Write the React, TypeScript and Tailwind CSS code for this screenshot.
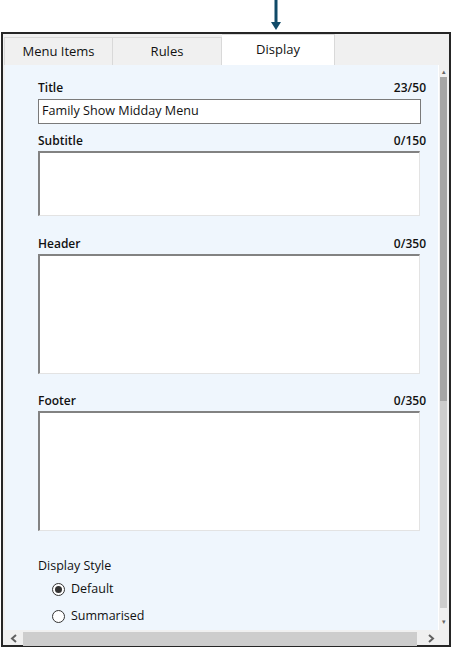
import React from "react";

const font = { fontFamily: '"Open Sans", "Noto Sans", sans-serif' };

function Field({ label, count, height, single, value, className }: { label: string; count: string; height: number; single?: boolean; value?: string; className?: string }) {
  return (
    <div className={className}>
      <div className="flex justify-between items-center h-4 mb-[3px] text-[12px] font-semibold text-[#111] leading-4">
        <span>{label}</span>
        <span className="mr-[-5px]">{count}</span>
      </div>
      {single ? (
        <div className="h-[25px] border border-[#7a7a7a] bg-white flex items-center px-[3px] text-[12.6px] text-[#111]">
          {value}
        </div>
      ) : (
        <div
          className="bg-white border-t-2 border-l-2 border-t-[#828282] border-l-[#828282] border-r border-b border-r-[#e3e3e3] border-b-[#e3e3e3] mr-[1px] -mt-[1px]"
          style={{ height }}
        />
      )}
    </div>
  );
}

function Radio({ label, checked }: { label: string; checked?: boolean }) {
  return (
    <div className="flex items-center h-[27px] pl-[14px] gap-[6px] text-[12.5px] text-[#111]">
      <span className="w-[13px] h-[13px] rounded-full border border-[#333] bg-white flex items-center justify-center">
        {checked && <span className="w-[7px] h-[7px] rounded-full bg-[#333]" />}
      </span>
      <span>{label}</span>
    </div>
  );
}

function Chevron({ dir }: { dir: "left" | "right" }) {
  return (
    <svg width="8" height="9" viewBox="0 0 8 9">
      <path
        d={dir === "left" ? "M6 1 L2 4.5 L6 8" : "M2 1 L6 4.5 L2 8"}
        fill="none"
        stroke="#606060"
        strokeWidth="2"
      />
    </svg>
  );
}

export default function App() {
  return (
    <div className="w-[452px] h-[648px] bg-white relative overflow-hidden" style={font}>
      <svg className="absolute left-[270px] top-0" width="12" height="31" viewBox="0 0 12 31">
        <rect x="4.5" y="0" width="3" height="24" fill="#104a68" />
        <path d="M1 22 L11 22 L6 30 Z" fill="#104a68" />
      </svg>
      <div className="absolute left-[1px] top-[32px] w-[450px] h-[615px] border-2 border-[#262626] bg-[#f0f0f0] flex flex-col">
        <div className="flex items-end h-[31px] pl-[1px] shrink-0">
          <div className="w-[109px] h-[28px] border border-b-0 border-[#d9d9d9] flex items-center justify-center text-[13px] text-[#111]">
            Menu Items
          </div>
          <div className="w-[109px] h-[28px] border border-b-0 border-l-0 border-[#d9d9d9] flex items-center justify-center text-[13px] text-[#111]">
            Rules
          </div>
          <div className="w-[113px] h-[31px] bg-white border border-b-0 border-l-0 border-[#d9d9d9] flex items-start pt-[5px] justify-center text-[13px] text-[#111]">
            Display
          </div>
        </div>
        <div className="flex flex-1 ml-[2px] mr-[1px]">
          <div className="flex-1 bg-[#eff6fd] pl-[33px] pr-[17px] pt-[15px] border-r border-[#ffffff]">
            <Field label="Title" count="23/50" height={25} single value="Family Show Midday Menu" />
            <Field className="mt-[9px]" label="Subtitle" count="0/150" height={65} />
            <Field className="mt-[20px]" label="Header" count="0/350" height={120} />
            <Field className="mt-[19px]" label="Footer" count="0/350" height={120} />
            <div className="mt-[27px] h-4 leading-4 text-[12.5px] font-medium text-[#111]">Display Style</div>
            <div className="mt-[2px]">
              <Radio label="Default" checked />
              <Radio label="Summarised" />
            </div>
          </div>
          <div className="w-[9px] flex flex-col items-center pt-[3px] bg-[#f0f0f0]">
            <span className="text-[7px] leading-[8px] text-[#666]">▴</span>
            <div className="w-[7px] h-[324px] bg-[#a6a6a6] mt-[1px]" />
            <div className="w-[7px] flex-1 bg-[#cdcdcd] mb-[10px]" />
            <span className="text-[7px] leading-[8px] text-[#666] mb-[4px]">▾</span>
          </div>
        </div>
        <div className="h-[17px] flex items-center ml-[2px] mr-[4px] mb-[2px] shrink-0">
          <span className="w-[18px] flex justify-center">
            <Chevron dir="left" />
          </span>
          <div className="flex-1 h-[14px] bg-[#cdcdcd]" />
          <span className="w-[28px] flex justify-center">
            <Chevron dir="right" />
          </span>
        </div>
      </div>
    </div>
  );
}
